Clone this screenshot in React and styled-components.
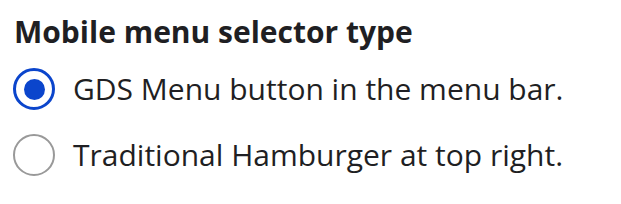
import React, { useState } from 'react';
import styled, { createGlobalStyle } from 'styled-components';

const GlobalStyle = createGlobalStyle`
  body {
    margin: 0;
    background: #ffffff;
    font-family: "Open Sans", "Noto Sans", sans-serif;
    color: #1f1f23;
  }
`;

const Fieldset = styled.fieldset`
  border: 0;
  margin: 0;
  padding: 12px 0 0 14px;
  display: flex;
  flex-direction: column;
`;

const Legend = styled.legend`
  padding: 0;
  font-size: 30px;
  font-weight: 700;
  line-height: 40px;
  float: left;
  margin-bottom: 16px;
`;

const Options = styled.div`
  display: flex;
  flex-direction: column;
  gap: 24px;
  clear: both;
`;

const Option = styled.label`
  display: flex;
  align-items: center;
  gap: 18px;
  font-size: 30px;
  line-height: 42px;
  cursor: pointer;
`;

const Radio = styled.input.attrs({ type: 'radio' })`
  appearance: none;
  flex: none;
  margin: 0 0 0 -1px;
  width: 42px;
  height: 42px;
  border-radius: 50%;
  border: 2px solid #999999;
  background: #ffffff;
  display: grid;
  place-items: center;
  box-sizing: border-box;

  &:checked {
    border: 3px solid #0b45cc;
  }
  &:checked::after {
    content: '';
    width: 21px;
    height: 21px;
    border-radius: 50%;
    background: #0b45cc;
  }
`;

const options = [
  { id: 'gds', text: 'GDS Menu button in the menu bar.' },
  { id: 'hamburger', text: 'Traditional Hamburger at top right.' },
];

export default function App() {
  const [value, setValue] = useState('gds');
  return (
    <>
      <GlobalStyle />
      <Fieldset>
        <Legend>Mobile menu selector type</Legend>
        <Options>
          {options.map((o) => (
            <Option key={o.id}>
              <Radio
                name="mobile-menu"
                checked={value === o.id}
                onChange={() => setValue(o.id)}
              />
              {o.text}
            </Option>
          ))}
        </Options>
      </Fieldset>
    </>
  );
}
